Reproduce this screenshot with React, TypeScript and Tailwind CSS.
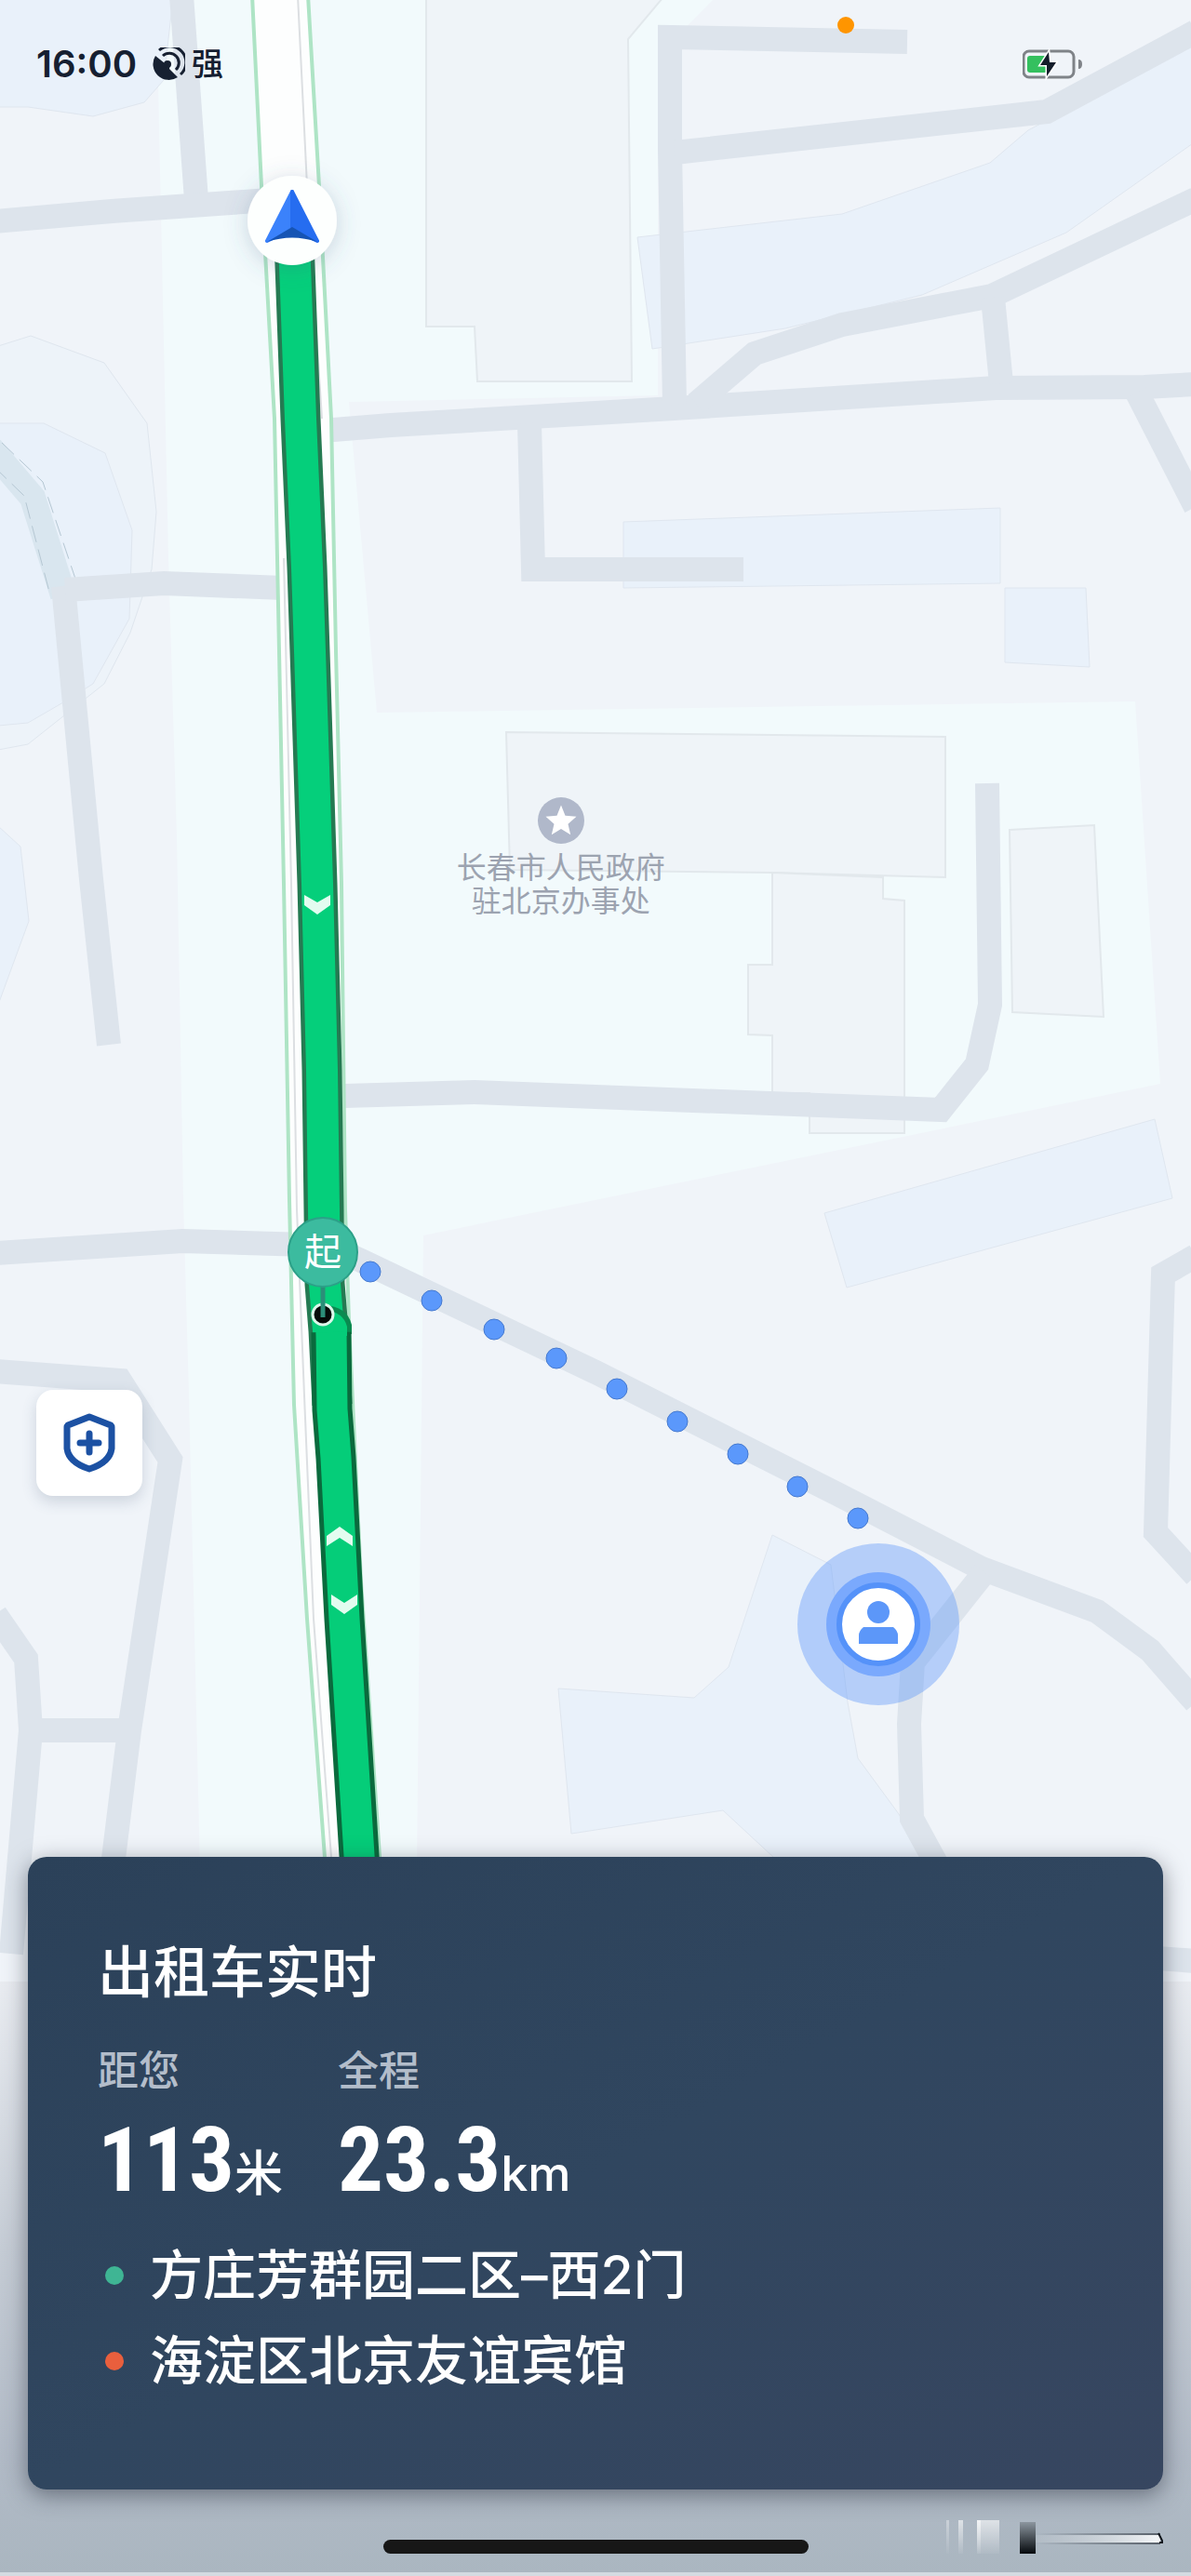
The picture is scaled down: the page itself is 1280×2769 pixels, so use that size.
import { ReactNode } from 'react'

const ROADS = [
  'M195 -5 L211 215',
  'M-5 238 L120 227 L290 215',
  'M346 463 L420 457 L640 444 L724 439 L1070 417 L1230 416 L1285 413',
  'M975 45 L720 40 L720 160 L725 435',
  'M725 164 L1125 120 L1285 34',
  'M748 434 L811 380 L905 349 L1066 318 L1285 214',
  'M1067 320 L1076 412',
  'M1222 422 L1285 545',
  'M569 455 L573 612 L799 612',
  'M1061 842 L1064 1080 L1050 1144 L1011 1193 L640 1179 L510 1174 L370 1178',
  'M68 630 L98 945 L117 1123',
  'M70 634 L176 627 L304 632',
  'M-5 1347 L196 1334 L330 1338',
  'M350 1338 L388 1355 L640 1475 L900 1606 L1055 1686 L1179 1732 L1236 1774 L1285 1830',
  'M1058 1690 L981 1787 L977 1853 L980 1955 L1010 2010',
  'M1285 1350 L1250 1370 L1242 1647 L1285 1694',
  'M-5 1474 L129 1484 L183 1569 L139 1860 L118 2030',
  'M-5 1735 L28 1783 L33 1860 L12 2100',
  'M33 1860 L139 1860',
  'M1230 2104 L1285 2108',
]

const BUILDINGS = [
  'M458 -2 V351 H510 L513 410 H679 L675 42 L712 -2 Z',
  'M544 787 L1016 792 V943 L830 938 L548 935 Z',
  'M830 938 L949 943 V966 L972 968 V1218 H870 V1175 H830 V1113 L804 1112 V1037 H830 Z',
  'M1085 892 L1176 887 L1186 1093 L1088 1088 Z',
]

const BLUE_AREAS = [
  'M-2 115 H30 L100 125 L155 110 L176 86 L186 -2 H-2 Z',
  'M-2 455 H47 L113 487 L142 570 L139 665 L100 735 L68 755 L30 777 L-2 780 Z',
  'M-2 888 L22 910 L31 990 L-2 1080 Z',
  'M685 255 L905 230 L1064 175 L1105 140 L1285 45 V152 L1146 250 L991 317 L844 353 L701 375 Z',
  'M670 561 L1075 546 V627 L670 632 Z',
  'M1080 632 H1167 L1171 717 L1080 712 Z',
  'M886 1304 L1241 1203 L1260 1288 L910 1384 Z',
  'M600 1815 L746 1825 L783 1792 L830 1650 L893 1682 L911 1830 L922 1890 L966 1950 L1000 2010 H846 L777 1946 L614 1971 Z',
]

const WALK_DOTS = [
  [398, 1367],
  [464, 1398],
  [531, 1429],
  [598, 1460],
  [663, 1493],
  [728, 1528],
  [793, 1563],
  [857, 1598],
  [922, 1632],
]

const ROUTE_A = 'M315 235 L317 285 L323 450 L330 610 L333 700 L341 950 L346 1150 L348 1300 L349 1380 L353 1430 L357 1510'
const ROUTE_B = 'M356 1432 L357 1515 L361 1567 L370 1740 L387 2010'

function MapCanvas() {
  return (
    <svg
      className="absolute inset-0 h-full w-full"
      viewBox="0 0 1280 2769"
      preserveAspectRatio="xMidYMin slice"
      aria-hidden="true"
    >
      <defs>
        <linearGradient id="ground" x1="0" y1="0" x2="0" y2="1">
          <stop offset="0" stopColor="#e9ecf1" />
          <stop offset="0.45" stopColor="#c5ccd5" />
          <stop offset="0.8" stopColor="#b1bac6" />
          <stop offset="1" stopColor="#aab6c0" />
        </linearGradient>
        <filter id="soft" x="-50%" y="-50%" width="200%" height="200%">
          <feDropShadow dx="0" dy="4" stdDeviation="12" floodColor="#4a6285" floodOpacity="0.25" />
        </filter>
      </defs>

      <rect width="1280" height="2769" fill="#f0f4f9" />
      <path
        d="M168 -2 H768 L707 60 V425 L375 432 L405 766 L1220 754 L1247 1165 L455 1328 L448 2010 H215 L203 1500 L197 1290 L190 900 L181 600 Z"
        fill="#f2fafc"
      />
      <path
        d="M-2 372 L33 361 L112 390 L158 455 L168 550 L163 612 L140 680 L112 735 L30 800 L-2 806 Z"
        fill="#edf3f9"
        stroke="#dfe6ee"
      />
      {BUILDINGS.map((d) => (
        <path key={d} d={d} fill="#eff4f8" stroke="#e2e8ec" strokeWidth="2" />
      ))}
      {BLUE_AREAS.map((d) => (
        <path key={d} d={d} fill="#e9f1fa" stroke="#dfe6ef" strokeWidth="1" />
      ))}

      {/* stream with dashed banks */}
      <path d="M-10 482 L35 535 L68 640" fill="none" stroke="#d9e6ef" strokeWidth="28" />
      <path
        d="M2 476 L46 518 L82 625 M-6 502 L26 533 L54 640"
        fill="none"
        stroke="#b5c7d3"
        strokeWidth="1"
        strokeDasharray="18 8"
      />

      <g fill="none" stroke="#dde4ec" strokeWidth="26" strokeLinejoin="miter">
        {ROADS.map((d) => (
          <path key={d} d={d} />
        ))}
      </g>

      <path
        d="M271 -5 L281 200 L295 450 L300 700 L305 950 L311 1290 L316 1510 L330 1740 L350 2010 H409 L388 1700 L375 1420 L371 1300 L367 950 L361 700 L356 450 L343 200 L331 -5 Z"
        fill="#fdfefe"
        stroke="#aee4c5"
        strokeWidth="4"
      />
      <path
        d="M320 -5 L330 200 L346 450 M305 600 L313 950 L319 1300 L327 1500 L337 1740 L357 2010"
        fill="none"
        stroke="#dcdfe2"
        strokeWidth="2"
      />

      <g fill="none" strokeLinejoin="round">
        <path d={ROUTE_A} stroke="#257a52" strokeWidth="43" />
        <path d={ROUTE_A} stroke="#05cf7b" strokeWidth="34" />
        <path d="M348 1403 Q373 1404 378 1424 V1434 H350 Z" fill="#0a8a50" />
        <path d={ROUTE_B} stroke="#0a6a3d" strokeWidth="43" />
        <path d="M338 1408 H348 Q369 1410 373 1426 V1436 H340 Z" fill="#05cd79" />
        <path d={ROUTE_B} stroke="#05cd79" strokeWidth="33" />
      </g>

      <g fill="#e3fcf0">
        <path d="M327 962 L341 970 L355 962 V973 L341 983 L327 973 Z" />
        <path d="M351 1651 L365 1641 L379 1651 V1662 L365 1653 L351 1662 Z" />
        <path d="M356 1714 L370 1723 L384 1714 V1725 L370 1735 L356 1725 Z" />
      </g>

      {WALK_DOTS.map(([x, y]) => (
        <circle key={x} cx={x} cy={y} r="11" fill="#5b98fb" stroke="#4579cf" strokeWidth="1" />
      ))}

      {/* taxi heading */}
      <circle cx="314" cy="237" r="48" fill="#fdfffe" filter="url(#soft)" />
      <g strokeLinejoin="round" strokeWidth="4">
        <path d="M314 206 L287 259 L314 246 Z" fill="#3b82fb" stroke="#3b82fb" />
        <path d="M314 206 L341 259 L314 246 Z" fill="#266df0" stroke="#266df0" />
        <path d="M287 260 L314 244 L341 260 Q314 251 287 260 Z" fill="#1654b4" />
      </g>

      {/* pick-up point */}
      <circle cx="347" cy="1413" r="11" fill="#050b09" stroke="#ddf7ea" strokeWidth="3" />
      <path d="M347 1380 V1416" stroke="#2c8e79" strokeWidth="5" />

      {/* passenger */}
      <circle cx="944" cy="1746" r="87" fill="#5c97fb" fillOpacity="0.4" />
      <circle cx="944" cy="1746" r="56" fill="#7aa9fd" />
      <circle cx="944" cy="1746" r="42" fill="#fff" stroke="#5592f9" strokeWidth="6" />
      <circle cx="944" cy="1733" r="12" fill="#5c97f9" />
      <path d="M928 1749 H960 Q965 1753 965 1758 V1767 H923 V1758 Q923 1753 928 1749 Z" fill="#5c97f9" />

      <rect y="2130" width="1280" height="639" fill="url(#ground)" />
      <rect y="2765" width="1280" height="4" fill="#d3dbe1" />
    </svg>
  )
}

function MapPin({ className, children }: { className: string; children: ReactNode }) {
  return (
    <div className={`absolute flex -translate-x-1/2 -translate-y-1/2 flex-col items-center ${className}`}>{children}</div>
  )
}

function SatelliteIcon() {
  return (
    <svg className="h-9 w-9" viewBox="0 0 36 36" fill="none" aria-hidden="true">
      <path d="M4 9 A17 17 0 0 0 28 32 L19 23 L20 16 L14 17 Z" fill="#162031" />
      <circle cx="17" cy="18" r="4" fill="#162031" />
      <path d="M8 3 A16 16 0 0 1 31 29" stroke="#162031" strokeWidth="3" />
      <path d="M12 9 A10 10 0 0 1 26 24" stroke="#162031" strokeWidth="3" />
    </svg>
  )
}

function BatteryIcon() {
  return (
    <svg className="h-9 w-16" viewBox="0 0 64 36" fill="none" role="img" aria-label="充电中">
      <rect x="1" y="4" width="54" height="28" rx="6" stroke="#7f8388" strokeWidth="3" />
      <rect x="5" y="9" width="22" height="18" rx="3" fill="#34c05f" />
      <path d="M60 13 Q64 13 64 18 Q64 23 60 23 Z" fill="#7f8388" />
      <path d="M28 5 L19 19 H26 V31 L36 16 H29 Z" fill="#141d2b" stroke="#fff" strokeWidth="3" paintOrder="stroke" />
    </svg>
  )
}

function Glare() {
  return (
    <svg className="h-9 w-60" viewBox="0 0 240 36" aria-hidden="true">
      <defs>
        <linearGradient id="fade" x1="0" y1="0" x2="0" y2="1">
          <stop offset="0" stopColor="#fff" stopOpacity="0.6" />
          <stop offset="1" stopColor="#fff" stopOpacity="0.05" />
        </linearGradient>
        <linearGradient id="ink" x1="0" y1="0" x2="0" y2="1">
          <stop offset="0" stopColor="#8c969f" />
          <stop offset="1" stopColor="#05090d" />
        </linearGradient>
        <linearGradient id="beam" x1="0" y1="0" x2="1" y2="0">
          <stop offset="0" stopColor="#c9d0d6" stopOpacity="0.2" />
          <stop offset="1" stopColor="#f4f6f8" />
        </linearGradient>
        <linearGradient id="edge" x1="0" y1="0" x2="1" y2="0">
          <stop offset="0" stopColor="#59616b" stopOpacity="0" />
          <stop offset="1" stopColor="#59616b" />
        </linearGradient>
      </defs>
      <rect x="7" width="3" height="36" fill="url(#fade)" opacity="0.6" />
      <rect x="20" width="5" height="36" fill="url(#fade)" />
      <rect x="40" width="24" height="36" fill="url(#fade)" />
      <rect x="40" width="4" height="36" fill="url(#fade)" />
      <rect x="86" y="2" width="17" height="34" fill="url(#ink)" />
      <rect x="103" y="14" width="134" height="2" fill="url(#edge)" />
      <rect x="103" y="16" width="134" height="8" fill="url(#beam)" />
      <rect x="103" y="24" width="134" height="2" fill="url(#edge)" />
      <path d="M235 14 L240 24 H236" fill="none" stroke="#11161c" strokeWidth="2" />
    </svg>
  )
}

function Metric({ label, value, unit }: { label: string; value: string; unit: string }) {
  return (
    <div>
      <dt className="text-[44px] leading-14 font-medium text-[#b3bdca]">{label}</dt>
      <dd className="flex items-baseline pt-2 font-medium text-white">
        <span className="font-['Roboto_Condensed','Liberation_Sans_Narrow','Liberation_Sans',sans-serif] text-[97px] leading-[120px] font-bold">
          {value}
        </span>
        <span className="font-['Inter','Noto_Sans_CJK_SC',sans-serif] text-[52px] leading-[72px]">{unit}</span>
      </dd>
    </div>
  )
}

function Stop({ name, dot }: { name: string; dot: string }) {
  return (
    <li className="flex items-center gap-7 pl-2">
      <span className={`h-5 w-5 rounded-full ${dot}`} />
      <span className="text-[57px] leading-[72px] font-medium text-white">{name}</span>
    </li>
  )
}

export default function App() {
  return (
    <main className="relative flex min-h-screen flex-col overflow-hidden bg-[#aab6c0] font-['Inter','Noto_Sans_CJK_SC',sans-serif]">
      <MapCanvas />

      <MapPin className="top-[33.3%] left-[47.1%]">
        <span className="flex h-[50px] w-[50px] items-center justify-center rounded-full bg-[#b0b8ca]">
          <svg className="h-9 w-9" viewBox="0 0 24 24" fill="#fff" aria-hidden="true">
            <path d="M12 1 L15 8.500 L23 9.200 L17 14.500 L18.800 22.200 L12 18 L5.200 22.200 L7 14.500 L1 9.200 L9 8.500 Z" />
          </svg>
        </span>
        <span className="mt-2 text-center text-[32px] leading-9 whitespace-nowrap text-[#9ca3b0]">
          长春市人民政府
          <br />
          驻北京办事处
        </span>
      </MapPin>
      <MapPin className="top-[48.6%] left-[27.1%]">
        <span className="flex h-[76px] w-[76px] items-center justify-center rounded-full border-2 border-[#2ca088] bg-[#3cbb9f] text-[40px] text-white">
          起
        </span>
      </MapPin>

      <header className="relative flex items-center justify-between px-[39px] pt-11">
        <div className="flex items-center text-[#162031]">
          <time className="text-[40px] leading-[50px] font-semibold">16:00</time>
          <span className="ml-4 flex items-center gap-[7px]">
            <SatelliteIcon />
            <span className="text-[34px] leading-[50px] font-medium">强</span>
          </span>
        </div>
        <span className="absolute top-[18px] left-[71%] h-[18px] w-[18px] -translate-x-1/2 rounded-full bg-[#ff9500]" />
        <div className="pr-[78px]">
          <BatteryIcon />
        </div>
      </header>

      <button
        type="button"
        aria-label="安全中心"
        className="relative mt-auto mb-[388px] ml-[39px] flex h-[114px] w-[114px] items-center justify-center rounded-[18px] bg-white shadow-[0_6px_16px_rgba(60,80,110,0.2)]"
      >
        <svg className="h-16 w-14" viewBox="0 0 56 64" fill="none" stroke="#1c51a3" strokeWidth="7" aria-hidden="true">
          <path d="M28 4 L51 13 Q52 14 52 15 V38 Q50 53 28 60 Q6 53 4 38 V15 Q4 14 5 13 Z" strokeLinejoin="round" />
          <path d="M28 22 V42 M18 32 H38" strokeLinecap="round" />
        </svg>
      </button>

      <section className="relative mx-[30px] rounded-[20px] bg-linear-to-br from-[#2b4159] via-[#30465f] to-[#374660] px-[75px] pt-[88px] pb-[102px] shadow-[0_6px_24px_rgba(30,35,50,0.5)]">
        <h1 className="text-[60px] leading-[72px] font-medium text-white">出租车实时</h1>
        <dl className="mt-[42px] grid grid-cols-[258px_auto] justify-start">
          <Metric label="距您" value="113" unit="米" />
          <Metric label="全程" value="23.3" unit="km" />
        </dl>
        <ul className="mt-7 flex flex-col gap-5">
          <Stop name="方庄芳群园二区–西2门" dot="bg-[#3fb594]" />
          <Stop name="海淀区北京友谊宾馆" dot="bg-[#e95f3d]" />
        </ul>
      </section>

      <footer className="relative grid grid-cols-[1fr_auto_1fr] items-end px-[30px] pt-[33px] pb-6">
        <span />
        <span className="h-[15px] w-[457px] rounded-full bg-[#171717]" />
        <span className="flex justify-end">
          <Glare />
        </span>
      </footer>
    </main>
  )
}
